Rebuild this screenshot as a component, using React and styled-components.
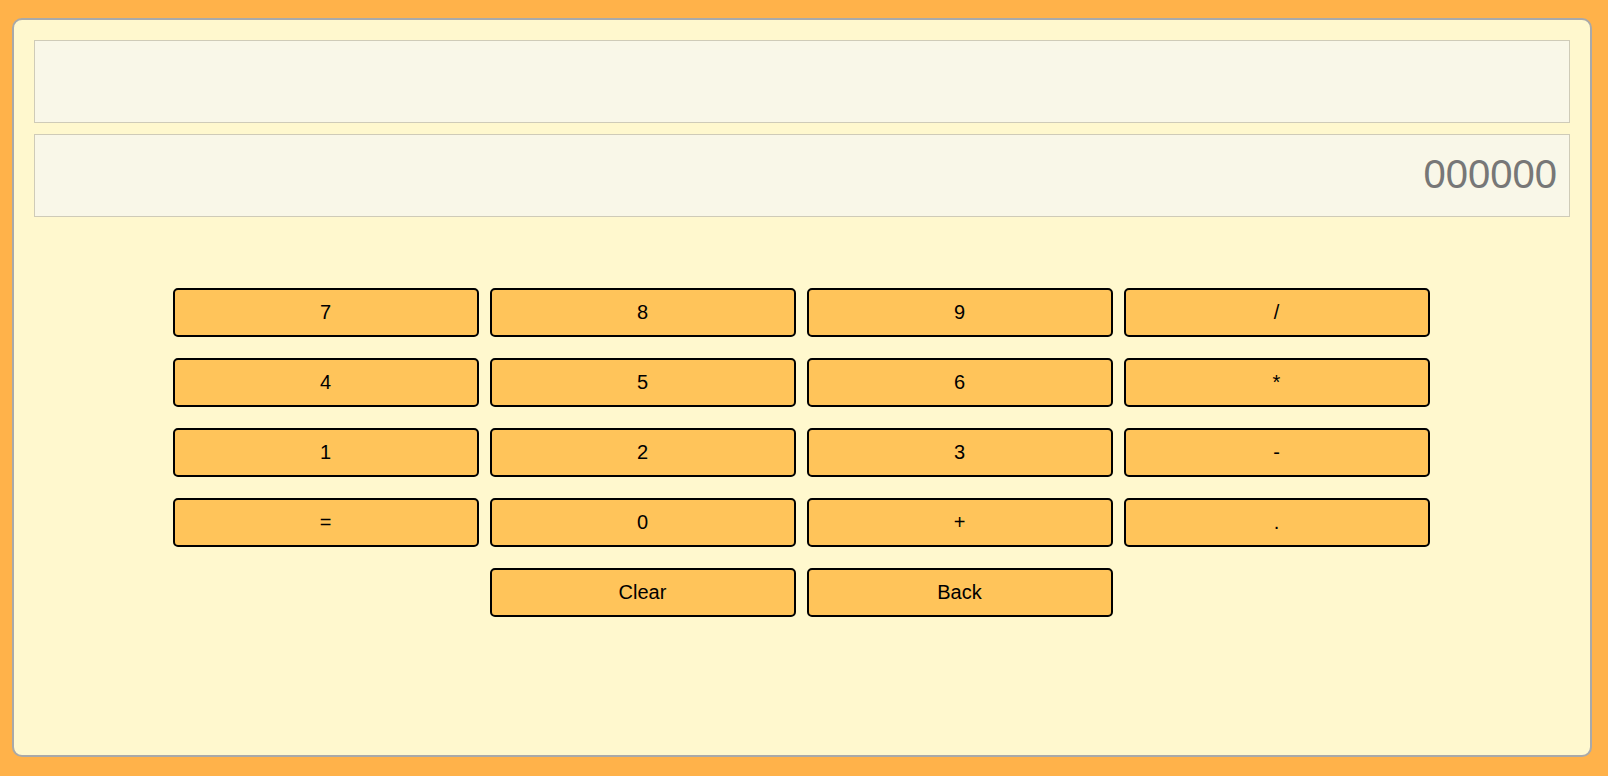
import styled, { createGlobalStyle } from "styled-components";

const GlobalStyle = createGlobalStyle`
  html, body {
    margin: 0;
    padding: 0;
    background: #ffb24a;
  }
  body {
    padding: 18px 16px 19px 12px;
    font-family: "Liberation Sans", Arial, sans-serif;
  }
`;

const Calculator = styled.div`
  box-sizing: border-box;
  height: 739px;
  padding: 20px 20px;
  background: #fff8ce;
  border: 2px solid #a9a9a9;
  border-radius: 10px;
`;

const Screen = styled.div`
  display: flex;
  flex-direction: column;
  gap: 11px;
`;

const Display = styled.div`
  box-sizing: border-box;
  height: 83px;
  display: flex;
  align-items: center;
  justify-content: flex-end;
  padding: 0 12px 2px;
  background: #f9f7e8;
  border: 1px solid #cfcbb8;
  font-size: 40px;
  color: #777;
`;

const Keypad = styled.div`
  display: grid;
  grid-template-columns: repeat(4, 306px);
  grid-auto-rows: 49px;
  gap: 21px 11px;
  justify-content: center;
  margin-top: 71px;
  padding-right: 2px;
`;

const Key = styled.button`
  box-sizing: border-box;
  grid-column: ${(p) => p.$col || "auto"};
  background: #ffc45a;
  border: 2px solid #000;
  border-radius: 5px;
  font-family: "Liberation Sans", Arial, sans-serif;
  font-size: 20px;
  color: #000;
  cursor: pointer;
`;

const keys = ["7", "8", "9", "/", "4", "5", "6", "*", "1", "2", "3", "-", "=", "0", "+", "."];

export default function App() {
  return (
    <>
      <GlobalStyle />
      <Calculator>
        <Screen>
          <Display />
          <Display>000000</Display>
        </Screen>
        <Keypad>
          {keys.map((k) => (
            <Key key={k}>{k}</Key>
          ))}
          <Key $col="2">Clear</Key>
          <Key>Back</Key>
        </Keypad>
      </Calculator>
    </>
  );
}
